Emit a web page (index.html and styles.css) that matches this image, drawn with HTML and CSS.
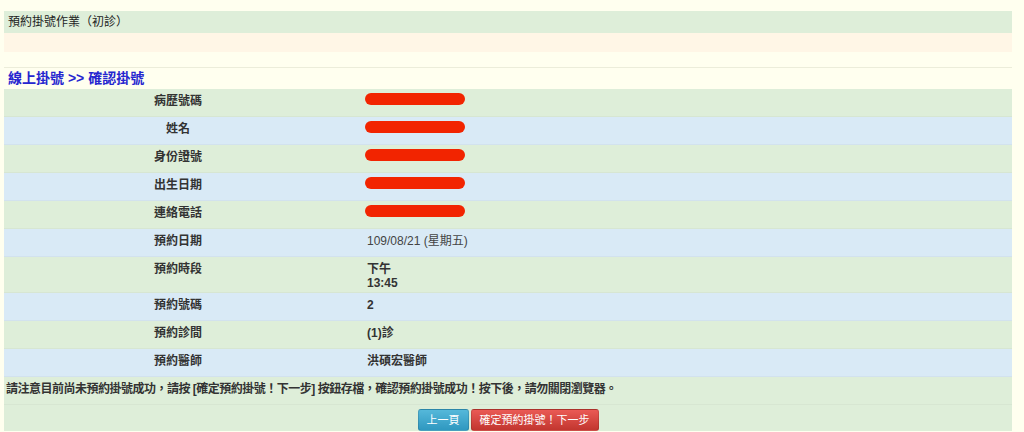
FILE: index.html
```html
<!DOCTYPE html>
<html lang="zh-Hant">
  <head>
    <meta charset="UTF-8" />
    <meta name="viewport" content="width=device-width, initial-scale=1.0" />
    <title>預約掛號作業（初診）</title>
    <link rel="stylesheet" href="styles.css">
  </head>
  <body>
    <div class="page">
      <div class="head-bar">預約掛號作業（初診）</div>
      <div class="sub-bar"></div>
      <div class="spacer"></div>
      <div class="crumb">線上掛號 &gt;&gt; 確認掛號</div>
      <table class="confirm">
        <tr class="g">
          <th>病歷號碼</th>
          <td><span class="mask"></span></td>
        </tr>
        <tr class="b">
          <th>姓名</th>
          <td><span class="mask"></span></td>
        </tr>
        <tr class="g">
          <th>身份證號</th>
          <td><span class="mask"></span></td>
        </tr>
        <tr class="b">
          <th>出生日期</th>
          <td><span class="mask"></span></td>
        </tr>
        <tr class="g">
          <th>連絡電話</th>
          <td><span class="mask"></span></td>
        </tr>
        <tr class="b">
          <th>預約日期</th>
          <td class="plain">109/08/21 (星期五)</td>
        </tr>
        <tr class="g">
          <th>預約時段</th>
          <td>下午<br>13:45</td>
        </tr>
        <tr class="b">
          <th>預約號碼</th>
          <td>2</td>
        </tr>
        <tr class="g">
          <th>預約診間</th>
          <td>(1)診</td>
        </tr>
        <tr class="b">
          <th>預約醫師</th>
          <td>洪碩宏醫師</td>
        </tr>
        <tr class="g">
          <td colspan="2" class="notice">請注意目前尚未預約掛號成功，請按 [確定預約掛號！下一步] 按鈕存檔，確認預約掛號成功！按下後，請勿關閉瀏覽器。</td>
        </tr>
        <tr class="g">
          <td colspan="2" class="actions">
            <button class="btn btn-info">上一頁</button><button class="btn btn-danger">確定預約掛號！下一步</button>
          </td>
        </tr>
      </table>
    </div>
  </body>
</html>
```

FILE: styles.css
```css
body {
  margin: 0;
  background: #FFFFEF;
  font-family: "Liberation Sans", "Noto Sans CJK TC", sans-serif;
  font-size: 12px;
  color: #333;
}
.page {
  padding: 11px 12px 0 4px;
}
.head-bar {
  background: #DEEED9;
  height: 22px;
  line-height: 22px;
  padding-left: 4px;
  color: #222;
}
.sub-bar {
  background: #FFF6E6;
  height: 19px;
}
.spacer {
  height: 15px;
  border-bottom: 1px solid #ECEDDA;
}
.crumb {
  height: 21px;
  line-height: 21px;
  padding-left: 4px;
  font-size: 14px;
  font-weight: bold;
  color: #2626CF;
}
.confirm {
  width: 100%;
  border-collapse: collapse;
}
.confirm tr.g {
  background: #DEEED9;
}
.confirm tr.b {
  background: #D9EAF6;
}
.confirm th,
.confirm td {
  height: 20px;
  padding: 5px 0 2px;
  line-height: 14px;
  vertical-align: top;
  font-weight: bold;
  color: #333;
  border-bottom: 1px solid rgba(0, 0, 0, 0.03);
}
.confirm th {
  width: 348px;
  text-align: center;
}
.confirm td {
  padding-left: 15px;
}
.confirm td.plain {
  font-weight: normal;
  color: #444;
}
.mask {
  display: inline-block;
  width: 100px;
  height: 12px;
  margin: -1px 0 0 -2px;
  border-radius: 6px;
  background: #F22400;
  vertical-align: top;
}
.confirm td.notice {
  padding-left: 2px;
  letter-spacing: -0.5px;
}
.confirm td.actions {
  padding: 4px 0 0;
  text-align: center;
  border-bottom: 0;
}
.btn {
  font-family: "Liberation Sans", "Noto Sans CJK TC", sans-serif;
  font-size: 11px;
  color: #fff;
  padding: 3px 8px;
  margin: 0 1px;
  border: 1px solid rgba(0, 0, 0, 0.12);
  border-radius: 3px;
  line-height: 14px;
}
.btn-info {
  background: linear-gradient(#55B8DA, #2F98C0);
}
.btn-danger {
  background: linear-gradient(#EA5A55, #C2362F);
}
```
